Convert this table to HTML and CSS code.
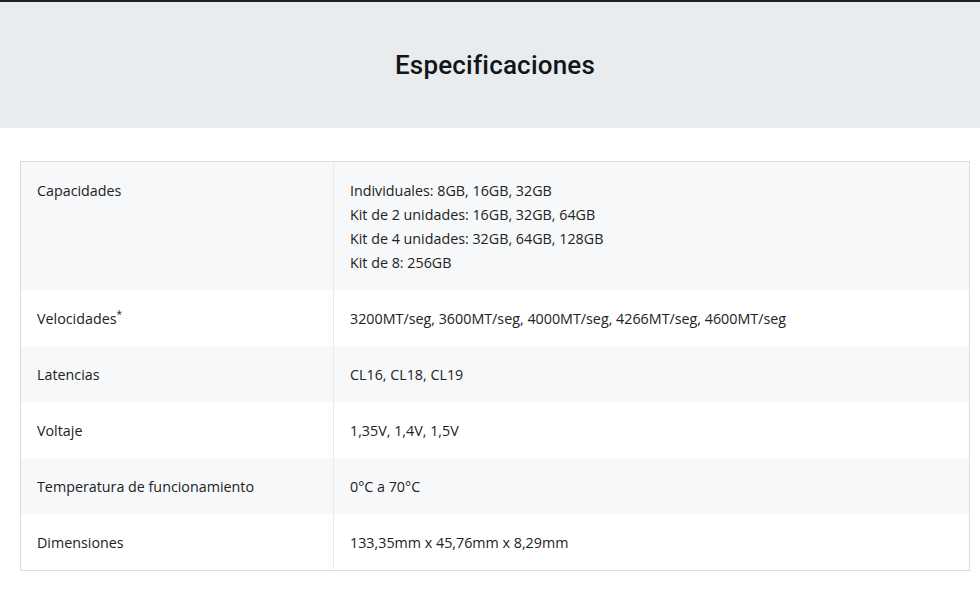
FILE: index.html
```html
<!DOCTYPE html>
<html lang="es">
<head>
<meta charset="utf-8">
<link rel="stylesheet" href="styles.css">
</head>
<body>
<header class="band">
  <h1 class="title">Especificaciones</h1>
</header>
<main class="wrap">
  <table class="specs">
    <tr class="alt">
      <td class="label">Capacidades</td>
      <td class="value">Individuales: 8GB, 16GB, 32GB<br>Kit de 2 unidades: 16GB, 32GB, 64GB<br>Kit de 4 unidades: 32GB, 64GB, 128GB<br>Kit de 8: 256GB</td>
    </tr>
    <tr>
      <td class="label">Velocidades<sup class="ast">*</sup></td>
      <td class="value">3200MT/seg, 3600MT/seg, 4000MT/seg, 4266MT/seg, 4600MT/seg</td>
    </tr>
    <tr class="alt">
      <td class="label">Latencias</td>
      <td class="value">CL16, CL18, CL19</td>
    </tr>
    <tr>
      <td class="label">Voltaje</td>
      <td class="value">1,35V, 1,4V, 1,5V</td>
    </tr>
    <tr class="alt">
      <td class="label">Temperatura de funcionamiento</td>
      <td class="value">0°C a 70°C</td>
    </tr>
    <tr>
      <td class="label">Dimensiones</td>
      <td class="value">133,35mm x 45,76mm x 8,29mm</td>
    </tr>
  </table>
</main>
</body>
</html>
```

FILE: styles.css
```css
html, body {
  margin: 0;
  padding: 0;
  background: #ffffff;
}
body {
  font-family: "Open Sans", "Noto Sans", sans-serif;
  color: #222222;
}
.band {
  background: #e9ecef;
  border-top: 2px solid #1f2326;
  height: 126px;
  padding-left: 10px;
  display: flex;
  align-items: center;
  justify-content: center;
}
.title {
  margin: 0;
  font-family: Roboto, "Liberation Sans", sans-serif;
  font-weight: 500;
  font-size: 26px;
  color: #111418;
  letter-spacing: 0.2px;
}
.wrap {
  padding: 33px 10px 0 20px;
}
.specs {
  width: 950px;
  border-collapse: collapse;
  border: 1px solid #dcdcdc;
  font-size: 14.3px;
  line-height: 24px;
}
.specs tr {
  background: #ffffff;
}
.specs tr.alt {
  background: #f7f8f9;
}
.specs td {
  vertical-align: top;
  padding: 17px 17px 15px 16px;
}
.specs td.label {
  width: 279px;
  border-right: 1px solid #ebebeb;
}
.ast {
  font-size: 10px;
  line-height: 0;
  vertical-align: 6px;
}
```
